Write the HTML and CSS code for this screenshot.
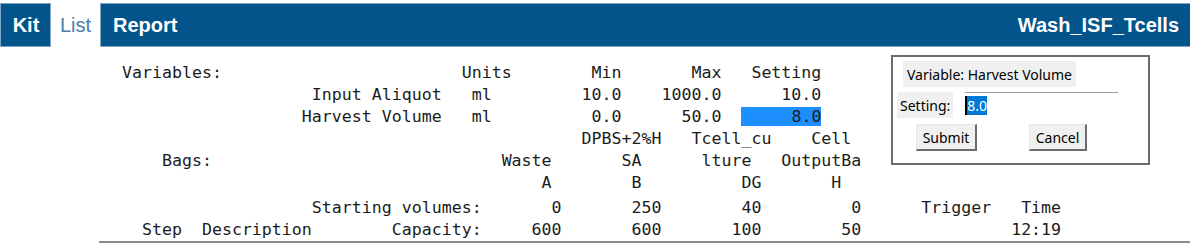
FILE: index.html
```html
<!DOCTYPE html>
<html>
<head>
<meta charset="utf-8">
<link rel="stylesheet" href="styles.css">
</head>
<body>
<header class="topbar">
  <div class="tab tab-kit">Kit</div>
  <div class="tab tab-list">List</div>
  <div class="tab tab-report">
    <span>Report</span>
    <span class="protocol">Wash_ISF_Tcells</span>
  </div>
</header>
<main class="content">
<pre class="report report-top">Variables:                        Units        Min       Max   Setting
                   Input Aliquot   ml         10.0    1000.0      10.0
                  Harvest Volume   ml          0.0      50.0  <span class="hl">8.0</span>
                                              DPBS+2%H   Tcell_cu    Cell
    Bags:                             Waste       SA      lture   OutputBa
                                          A        B          DG       H</pre>
<pre class="report report-bottom">                   Starting volumes:       0       250        40         0      Trigger   Time
  Step  Description        Capacity:     600       600       100        50               12:19</pre>
  <div class="rule"></div>
</main>
<div class="dialog">
  <div class="dlg-title">Variable: Harvest Volume</div>
  <div class="dlg-row">
    <div class="dlg-label">Setting:</div>
    <div class="dlg-entry"><span class="caret"></span><span class="sel">8.0</span></div>
  </div>
  <div class="dlg-buttons">
    <button class="btn btn-submit">Submit</button>
    <button class="btn btn-cancel">Cancel</button>
  </div>
</div>
</body>
</html>
```
FILE: styles.css
```css
html, body {
  margin: 0;
  padding: 0;
  background: #ffffff;
}
body {
  position: relative;
  width: 1190px;
  height: 243px;
  overflow: hidden;
  font-family: "Liberation Sans", Arial, sans-serif;
}
.topbar {
  display: flex;
  margin-top: 3px;
  height: 44px;
}
.tab {
  display: flex;
  align-items: center;
  font-size: 20px;
  box-sizing: border-box;
}
.tab-kit {
  width: 51px;
  justify-content: center;
  padding-left: 1px;
  background: #02548b;
  color: #ffffff;
  font-weight: bold;
  border: 1px solid #7fa6c6;
}
.tab-list {
  width: 49px;
  justify-content: center;
  background: #ffffff;
  color: #4a7dab;
}
.tab-report {
  flex: 1;
  justify-content: space-between;
  padding: 0 11px 0 12px;
  background: #02548b;
  color: #ffffff;
  font-weight: bold;
  border: 1px solid #7fa6c6;
  border-right: none;
}
.content {
  margin-left: 99px;
}
.report {
  margin: 0;
  padding-left: 23px;
  font-family: "DejaVu Sans Mono", monospace;
  font-size: 16.6px;
  line-height: 22px;
  color: #1c1c1c;
}
.report-top {
  margin-top: 15px;
}
.report-bottom {
  margin-top: 3px;
}
.hl {
  padding-left: 50px;
  background: #1e8fff;
}
.rule {
  height: 2px;
  background: #8a8a8a;
}
.dialog {
  position: absolute;
  left: 891px;
  top: 55px;
  width: 259px;
  height: 110px;
  box-sizing: border-box;
  border: 2px solid #6c6c6c;
  background: #ffffff;
  padding: 4px 0 0 0;
  font-family: "Noto Sans", sans-serif;
  font-size: 14px;
  color: #000000;
}
.dlg-title {
  display: inline-flex;
  align-items: center;
  margin-left: 10px;
  height: 26px;
  padding: 0 4px;
  background: #f0f0f0;
}
.dlg-row {
  display: flex;
  align-items: center;
  margin-top: 5px;
  height: 26px;
}
.dlg-label {
  display: flex;
  align-items: center;
  margin-left: 4px;
  height: 26px;
  padding: 0 3px;
  background: #f0f0f0;
}
.dlg-entry {
  display: flex;
  align-items: center;
  align-self: flex-start;
  margin-left: 12px;
  width: 153px;
  height: 26px;
  box-sizing: border-box;
  border-top: 1px solid #a0a0a0;
}
.caret {
  width: 2px;
  height: 19px;
  background: #000000;
}
.sel {
  background: #0078d7;
  color: #ffffff;
  line-height: 19px;
}
.dlg-buttons {
  display: flex;
  margin-top: 6px;
  padding-left: 23px;
  gap: 52px;
}
.btn {
  height: 27px;
  box-sizing: border-box;
  font-family: "Noto Sans", sans-serif;
  font-size: 14px;
  line-height: 20px;
  color: #000000;
  background: #f0f0f0;
  border-top: 1px solid #e6e6e6;
  border-left: 1px solid #e6e6e6;
  border-right: 2px solid #6c6c6c;
  border-bottom: 2px solid #6c6c6c;
  padding: 2px 0 0 0;
}
.btn-submit {
  width: 61px;
}
.btn-cancel {
  width: 58px;
}
```
